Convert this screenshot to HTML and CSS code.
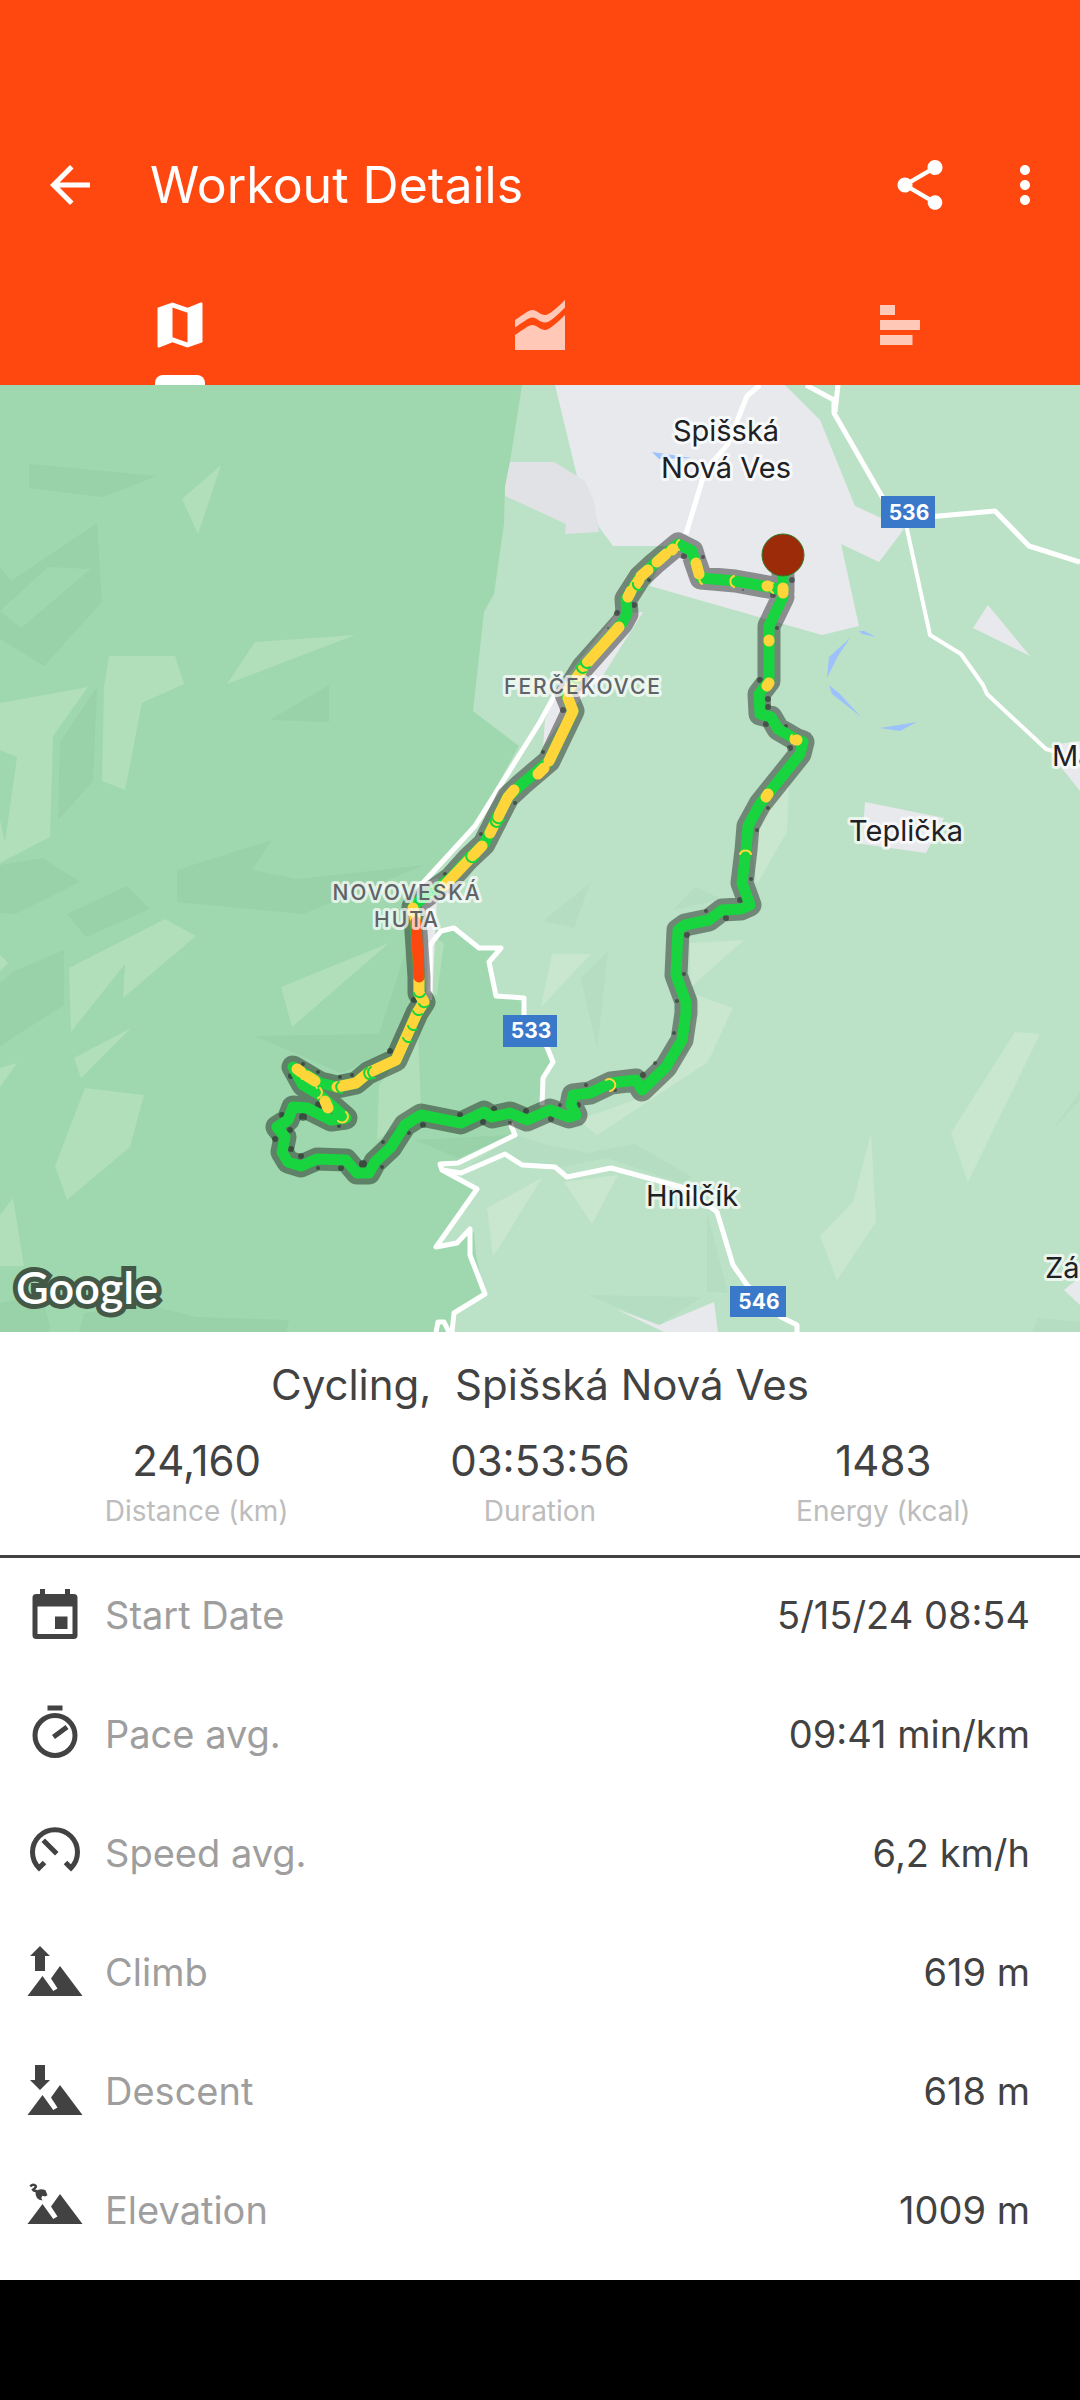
FILE: index.html
```html
<!DOCTYPE html>
<html lang="en">
<head>
    <meta charset="UTF-8">
    <meta name="viewport" content="width=device-width, initial-scale=1.0">
    <title>Workout Details</title>
    <link rel="stylesheet" href="styles.css">
</head>
<body>
    <header class="header">
        <div class="toolbar">
            <button class="icon-btn" aria-label="Back">
                <svg class="icon" viewBox="0 0 24 24"><path d="M20 11H7.83l5.59-5.59L12 4l-8 8 8 8 1.41-1.41L7.83 13H20v-2z"/></svg>
            </button>
            <h1 class="title">Workout Details</h1>
            <button class="icon-btn" aria-label="Share">
                <svg class="icon" viewBox="0 0 24 24"><path d="M18 16.08c-.76 0-1.44.3-1.96.77L8.91 12.7c.05-.23.09-.46.09-.7s-.04-.47-.09-.7l7.05-4.11c.54.5 1.25.81 2.04.81 1.66 0 3-1.34 3-3s-1.34-3-3-3-3 1.34-3 3c0 .24.04.47.09.7L8.04 9.81C7.5 9.31 6.79 9 6 9c-1.66 0-3 1.34-3 3s1.34 3 3 3c.79 0 1.5-.31 2.04-.81l7.12 4.16c-.05.21-.08.43-.08.65 0 1.61 1.31 2.92 2.92 2.92s2.92-1.31 2.92-2.92-1.31-2.92-2.92-2.92z"/></svg>
            </button>
            <button class="icon-btn more" aria-label="More options">
                <svg class="icon" viewBox="0 0 24 24"><path d="M12 8c1.1 0 2-.9 2-2s-.9-2-2-2-2 .9-2 2 .9 2 2 2zm0 2c-1.1 0-2 .9-2 2s.9 2 2 2 2-.9 2-2-.9-2-2-2zm0 6c-1.1 0-2 .9-2 2s.9 2 2 2 2-.9 2-2-.9-2-2-2z"/></svg>
            </button>
        </div>
        <nav class="tabs">
            <button class="tab active" aria-label="Map">
                <svg class="icon" viewBox="0 0 24 24"><path fill-rule="evenodd" d="M3 5.1L9 3l6 2.1L20.3 3q.7-.2.7.5v15.4L15 21l-6-2.1L3.7 21q-.7.2-.7-.5zM9 5v11.9l6 2.1V7.1z"/></svg>
            </button>
            <button class="tab" aria-label="Charts">
                <svg class="icon" viewBox="0 0 24 24"><path d="M2 10C5 8 7.500 6 9 6s3.300 2 5 2 5-3 8-6v3c-3 3-6 6-8 6s-3.500-2-5-2-4 2-7 4z"/><path d="M2 16c3-2 5.500-4 7-4s3.300 2 5 2 5-3 8-6v14H2z"/></svg>
            </button>
            <button class="tab" aria-label="Laps">
                <svg class="icon" viewBox="0 0 24 24"><path d="M4 4h6v4H4zM4 10h16v4H4zM4 16h13v4H4z"/></svg>
            </button>
        </nav>
    </header>

    <svg class="map" viewBox="0 385 1080 947" role="img" aria-label="Route map">
        <rect class="land" y="385" width="1080" height="947"/>
        <polygon class="forest" points="0,385 522,385 510,462 505,487 504,524 494,594 484,612 473,711 519,746 475,826 421,883 430,900 432,930 453,928 479,947 500,948 489,962 496,996 523,999 525,1015 553,1061 543,1080 540,1110 513,1120 514,1135 460,1163 440,1164 442,1172 477,1189 435,1247 457,1243 474,1232 476,1255 484,1294 454,1313 451,1332 0,1332"/>

        <!-- hill shading, west -->
        <g class="forest-dark">
            <polygon points="29,464 157,476 103,497 29,488"/>
            <polygon points="0,567 11,581 97,523 102,602 44,666 0,639"/>
            <polygon points="97,687 93,781 58,820 60,742"/>
            <polygon points="329,685 329,722 270,720"/>
            <polygon points="272,840 252,870 298,879 425,865 303,914 177,902 177,870"/>
            <polygon points="0,865 43,858 80,882 15,914 0,913"/>
            <polygon points="67,914 127,886 150,909 86,937"/>
            <polygon points="0,983 14,971 64,950 64,1005 0,1046"/>
            <polygon points="255,1036 379,1034 406,950 415,997 396,1050 341,1073"/>
            <polygon points="415,1140 510,1135 458,1158"/>
            <polygon points="84,1313 148,1305 196,1317 289,1320 286,1332 79,1332"/>
            <polygon points="0,1303 31,1297 45,1307 50,1327 48,1332 0,1332"/>
        </g>
        <polygon class="forest" points="0,611 48,567 91,569 21,628"/>
        <g class="forest-light">
            <polygon points="182,499 221,465 198,534"/>
            <polygon points="255,642 355,635 227,684"/>
            <polygon points="109,656 175,656 184,684 142,703 125,790 102,781 104,686"/>
            <polygon points="0,703 88,687 53,736 50,837 0,863 0,819 5,842 17,757 0,750"/>
            <polygon points="69,968 165,919 196,936 123,998 125,964 71,1032"/>
            <polygon points="74,1058 131,1028 81,1078"/>
            <polygon points="0,1068 17,1063 0,1087"/>
            <polygon points="85,1088 144,1095 130,1147 67,1200 55,1166"/>
            <polygon points="13,1198 24,1266 0,1266 0,1215"/>
            <polygon points="0,955 8,963 0,971"/>
            <polygon points="281,987 389,943 292,1027"/>
            <polygon points="379,1085 418,1030 421,1107 396,1127 377,1140"/>
            <polygon points="432,936 444,943 437,995 430,995"/>
        </g>

        <!-- hill shading, east -->
        <g class="land-dark">
            <polygon points="543,921 590,883 574,928"/>
            <polygon points="673,910 695,887 722,899"/>
            <polygon points="581,978 608,951 597,1049"/>
            <polygon points="515,1135 540,1143 588,1153 635,1144 692,1177 681,1183 607,1158 561,1167 525,1162 505,1153 470,1165"/>
            <polygon points="707,1213 728,1293 707,1292"/>
            <polygon points="588,1295 702,1297 659,1325"/>
            <polygon points="1080,1092 1080,1100 1053,1129"/>
            <polygon points="1038,1318 1080,1322 1080,1332 1032,1332"/>
        </g>
        <g class="land-light">
            <polygon points="690,943 744,940 690,988"/>
            <polygon points="552,954 591,954 541,1007"/>
            <polygon points="697,995 733,1008 708,1062 597,1135 578,1120 643,1097 688,1050"/>
            <polygon points="1015,1032 1040,1034 968,1182 951,1133"/>
            <polygon points="871,1133 876,1222 837,1280 820,1236 853,1202"/>
            <polygon points="564,1182 618,1175 592,1224"/>
            <polygon points="789,784 787,832 757,884 752,850 770,800"/>
            <polygon points="487,1208 542,1178 493,1257"/>
        </g>

        <g class="urban">
            <polygon points="555,385 785,385 820,420 855,506 879,517 904,529 879,562 841,544 859,626 822,635 650,586 667,546 613,546 599,527 577,476"/>
            <polygon points="616,614 643,612 602,677 564,717 543,747 545,720 560,685"/>
            <polygon points="988,605 1030,656 973,628"/>
            <polygon points="865,802 944,818 926,853 862,844"/>
            <polygon points="1058,744 1080,741 1080,791 1053,757"/>
            <polygon points="714,1302 718,1332 664,1332 616,1309 659,1325"/>
            <polygon points="1064,1290 1080,1277 1080,1305"/>
            <polygon points="421,883 438,878 432,1000 426,1000"/>
        </g>
        <polygon class="industry" points="510,462 554,462 577,476 585,481 594,501 599,532 565,534 566,524 540,512 505,496 505,487"/>
        <g class="water">
            <polygon points="652,452 692,458 659,459"/>
            <polygon points="827,678 829,657 850,638 838,656"/>
            <polygon points="859,631 864,631 876,637 862,634"/>
            <polygon points="829,685 840,694 861,717 832,694"/>
            <polygon points="880,728 917,722 900,731"/>
        </g>

        <g class="roads">
            <polyline points="760,385 747,396 728,444 705,471 686,534"/>
            <polyline points="806,385 834,400 834,413 884,500 905,519 995,511 1029,546 1080,562"/>
            <polyline points="838,385 835,412"/>
            <polyline class="thin" points="905,520 930,635 961,654 983,685 987,694 1046,749 1056,752"/>
            <polyline points="563,680 540,722 475,826 421,885"/>
            <polyline points="430,993 430,945 441,931 454,928 479,948 501,948 489,962 496,996 524,998 524,1015 547,1047 553,1062 543,1078 542,1105"/>
            <polyline points="510,1123 515,1135 458,1163 440,1164 442,1170 477,1189 436,1247 457,1243 470,1229 470,1255 485,1294 454,1313 452,1332"/>
            <polyline points="436,1332 438,1322 444,1322 449,1332"/>
            <polyline points="442,1170 461,1173 505,1154 522,1165 555,1167 567,1177 611,1168 685,1188 717,1212 733,1265 747,1285 781,1317 797,1325 797,1334"/>
        </g>

        <!-- recorded track: casing, line, then speed colours -->
        <polyline class="track-case" points="783,575 783,592 774,588 735,581 701,578 695,561 692,551 678,544 654,564 640,577 626,599 627,614 622,623 583,667 566,694 573,711 549,761 522,784 508,797 484,844 468,859 451,878 418,902 413,907 415,917 419,977 419,993 424,1002 417,1013 396,1060 368,1073 356,1083 337,1087 320,1083 293,1067 303,1085 320,1095 331,1105 346,1118 331,1120 307,1108 293,1107 288,1120 277,1127 285,1137 282,1152 288,1162 301,1166 317,1159 346,1160 357,1173 369,1173 375,1162 391,1147 405,1125 421,1115 461,1123 484,1112 492,1117 510,1113 527,1120 550,1110 569,1117 576,1115 571,1105 573,1095 590,1093 611,1083 636,1080 642,1090 666,1067 682,1040 686,1013 686,1002 676,975 678,930 685,925 709,920 722,910 741,909 750,905 742,883 746,850 748,826 760,804 800,754 803,742 797,740 778,729 771,717 760,714 759,694 769,681 769,626 783,597"/>
        <g class="track-nodes">
            <circle cx="684" cy="556" r="3"/><circle cx="703" cy="557" r="2"/><circle cx="649" cy="580" r="2"/><circle cx="617" cy="613" r="3"/><circle cx="634" cy="605" r="3"/><circle cx="608" cy="628" r="1"/><circle cx="743" cy="590" r="1"/><circle cx="773" cy="595" r="3"/><circle cx="792" cy="580" r="3"/><circle cx="777" cy="628" r="2"/><circle cx="760" cy="680" r="3"/><circle cx="768" cy="699" r="3"/><circle cx="768" cy="707" r="3"/><circle cx="766" cy="724" r="3"/><circle cx="786" cy="726" r="2"/><circle cx="790" cy="748" r="3"/><circle cx="768" cy="808" r="2"/><circle cx="757" cy="830" r="2"/><circle cx="751" cy="879" r="2"/><circle cx="740" cy="900" r="3"/><circle cx="726" cy="918" r="3"/><circle cx="706" cy="911" r="2"/><circle cx="687" cy="935" r="3"/><circle cx="684" cy="974" r="2"/><circle cx="677" cy="1001" r="2"/><circle cx="674" cy="1033" r="2"/><circle cx="655" cy="1063" r="2"/><circle cx="643" cy="1075" r="3"/><circle cx="615" cy="1090" r="2"/><circle cx="586" cy="1085" r="2"/><circle cx="578" cy="1105" r="3"/><circle cx="560" cy="1105" r="2"/><circle cx="551" cy="1119" r="3"/><circle cx="526" cy="1111" r="3"/><circle cx="510" cy="1123" r="2"/><circle cx="494" cy="1109" r="3"/><circle cx="483" cy="1122" r="3"/><circle cx="460" cy="1115" r="3"/><circle cx="423" cy="1125" r="3"/><circle cx="409" cy="1133" r="2"/><circle cx="383" cy="1142" r="2"/><circle cx="382" cy="1167" r="2"/><circle cx="363" cy="1164" r="4"/><circle cx="341" cy="1168" r="3"/><circle cx="318" cy="1168" r="2"/><circle cx="301" cy="1156" r="3"/><circle cx="291" cy="1149" r="3"/><circle cx="275" cy="1139" r="3"/><circle cx="290" cy="1130" r="3"/><circle cx="282" cy="1115" r="3"/><circle cx="303" cy="1117" r="4"/><circle cx="319" cy="1105" r="4"/><circle cx="339" cy="1126" r="2"/><circle cx="291" cy="1076" r="3"/><circle cx="303" cy="1064" r="2"/><circle cx="318" cy="1072" r="2"/><circle cx="340" cy="1077" r="2"/><circle cx="352" cy="1075" r="2"/><circle cx="390" cy="1051" r="3"/><circle cx="414" cy="1000" r="3"/><circle cx="445" cy="874" r="2"/><circle cx="481" cy="834" r="2"/><circle cx="515" cy="803" r="2"/><circle cx="543" cy="752" r="2"/><circle cx="563" cy="710" r="3"/>
        </g>
        <polyline class="track" points="783,575 783,592 774,588 735,581 701,578 695,561 692,551 678,544 654,564 640,577 626,599 627,614 622,623 583,667 566,694 573,711 549,761 522,784 508,797 484,844 468,859 451,878 418,902 413,907 415,917 419,977 419,993 424,1002 417,1013 396,1060 368,1073 356,1083 337,1087 320,1083 293,1067 303,1085 320,1095 331,1105 346,1118 331,1120 307,1108 293,1107 288,1120 277,1127 285,1137 282,1152 288,1162 301,1166 317,1159 346,1160 357,1173 369,1173 375,1162 391,1147 405,1125 421,1115 461,1123 484,1112 492,1117 510,1113 527,1120 550,1110 569,1117 576,1115 571,1105 573,1095 590,1093 611,1083 636,1080 642,1090 666,1067 682,1040 686,1013 686,1002 676,975 678,930 685,925 709,920 722,910 741,909 750,905 742,883 746,850 748,826 760,804 800,754 803,742 797,740 778,729 771,717 760,714 759,694 769,681 769,626 783,597"/>
        <g class="track-slow">
            <path d="M673 549l-1 1M666 554l-9 8M648 570l-7 6M639 580l-4 6M631 591l-3 6M696 563l3 11M783 588v5M767 586h1M769 640v1M769 683l-2 3M796 740h1M768 794l-2 3"/>
            <path d="M619 627L587 663M582 670L568 690M568 698l5 13-24 50M544 768l-6 6M514 790l-6 7-18 36M482 846L444 886M413 908l2 10"/>
            <path d="M419 980v13l5 9-7 11-21 47-28 13-12 10-19 4M315 1081l-8-5M301 1072l-4-3M325 1101l3 7"/>
        </g>
        <path class="track-stop" d="M416 922l3 55"/>
        <g class="tick-green">
            <path d="M493 814a6 6 0 0 0 11 6M491 819a6 6 0 0 0 10 6M467 853a6 6 0 0 0 11 6M414 993a6 6 0 0 0 11 1M419 1004a6 6 0 0 0 9 2M413 1011a6 6 0 0 0 9 3M408 1026a6 6 0 0 0 9 3M403 1038a6 6 0 0 0 9 3M371 1067a6 6 0 0 0 4 11M367 1068a6 6 0 0 0 4 11M339 1082a6 6 0 0 0 3 11M577 666a6 6 0 0 0 9 6M581 661a6 6 0 0 0 9 6M571 676a6 6 0 0 0 9 6M633 583a6 6 0 0 0 9 6"/>
        </g>
        <g class="tick-yellow">
            <path d="M734 576a6 6 0 0 0 0 11M679 540a6 6 0 0 0 0 10M702 574a6 6 0 0 0 0 10M773 583a6 6 0 0 0 0 10M740 854a6 6 0 0 1 11 0M606 1080a6 6 0 1 1 4 11M346 1112a6 6 0 0 1-8 9M318 1079a6 6 0 0 0-1 9M304 1069a6 6 0 0 0-2 10M320 1088a6 6 0 0 1-2 10M792 735a6 6 0 0 0 0 8"/>
        </g>
        <circle class="pin" cx="783" cy="555" r="21"/>

        <text class="town" x="726" y="441">Spišská</text>
        <text class="town" x="726" y="478">Nová Ves</text>
        <text class="town" x="906" y="841">Teplička</text>
        <text class="town" x="692" y="1206">Hnilčík</text>
        <text class="town edge" x="1052" y="766">Ma</text>
        <text class="town edge" x="1045" y="1278">Zá</text>
        <text class="district" x="583" y="694">FERČEKOVCE</text>
        <text class="district" x="407" y="900">NOVOVESKÁ</text>
        <text class="district" x="407" y="927">HUTA</text>

        <g class="shield"><rect x="881" y="496" width="54" height="32"/><text x="909" y="520">536</text></g>
        <g class="shield"><rect x="503" y="1015" width="54" height="32"/><text x="531" y="1038">533</text></g>
        <g class="shield"><rect x="730" y="1286" width="56" height="31"/><text x="759" y="1309">546</text></g>

        <text class="brand" x="16" y="1304">Google</text>
    </svg>

    <section class="summary">
        <h2 class="activity">Cycling,&nbsp; Spišská Nová Ves</h2>
        <div class="stats">
            <div class="stat"><div class="number">24,160</div><div class="unit">Distance (km)</div></div>
            <div class="stat"><div class="number">03:53:56</div><div class="unit">Duration</div></div>
            <div class="stat"><div class="number">1483</div><div class="unit">Energy (kcal)</div></div>
        </div>
    </section>

    <dl class="details">
        <div class="row">
            <svg class="icon" viewBox="0 0 24 24"><path fill-rule="evenodd" d="M6 2h2v2h8V2h2v2h1.500Q21 4 21 5.500v15q0 1.500-1.500 1.500h-15Q3 22 3 20.500v-15Q3 4 4.500 4H6zM5 9v11h14V9zM12 13h5v5h-5z"/></svg>
            <dt>Start Date</dt>
            <dd>5/15/24 08:54</dd>
        </div>
        <div class="row">
            <svg class="icon line" viewBox="0 0 24 24"><path d="M9 2h6M11.400 13.600l5.400-4"/><circle cx="12" cy="13" r="8"/></svg>
            <dt>Pace avg.</dt>
            <dd>09:41 min/km</dd>
        </div>
        <div class="row">
            <svg class="icon line" viewBox="0 0 24 24"><path d="M7.800 16.200l-2.200 2.200a9 9 0 1 1 12.800 0l-2.200-2.200M7.300 7.300l5.400 5.400"/></svg>
            <dt>Speed avg.</dt>
            <dd>6,2 km/h</dd>
        </div>
        <div class="row">
            <svg class="icon" viewBox="0 0 24 24"><path d="M6 2l4 4H8v6H4V6H2zM1 22l6-8 4.300 6 1.700-1-2.600-4L14 10l9 12z"/></svg>
            <dt>Climb</dt>
            <dd>619 m</dd>
        </div>
        <div class="row">
            <svg class="icon" viewBox="0 0 24 24"><path d="M4 2h4v6h2l-4 4-4-4h2zM1 22l6-8 4.300 6 1.700-1-2.600-4L14 10l9 12z"/></svg>
            <dt>Descent</dt>
            <dd>618 m</dd>
        </div>
        <div class="row">
            <svg class="icon" viewBox="0 0 24 24"><path d="M1 18l6-8 4.300 6 1.700-1-2.600-4L14 6l9 12z"/><path d="M4.200 5Q6 3.400 8.200 4.500l.8 2-1 .5-1-.3-.5.9.5 1Q4 8.500 4.200 5z"/><path class="tail" d="M2.100 3Q3 2 4 2.500T3.200 4.300q.3.700 1.700.5"/></svg>
            <dt>Elevation</dt>
            <dd>1009 m</dd>
        </div>
    </dl>
</body>
</html>
```
FILE: styles.css
```css
body {
    margin: 0;
    background-color: #000;
    color: #424242;
    font-family: Inter, "Open Sans", sans-serif;
}
button {
    border: none;
    background: none;
    padding: 0;
    color: inherit;
    cursor: pointer;
}
.icon {
    display: block;
    flex: none;
    width: 60px;
    height: 60px;
    fill: currentColor;
}

/* header */
.header {
    padding-top: 105px;
    background-color: #ff4810;
    color: #fff;
}
.toolbar {
    display: flex;
    align-items: center;
    height: 160px;
    padding: 0 25px 0 40px;
}
.title {
    flex: 1;
    margin: 0 0 0 50px;
    font-size: 50px;
    font-weight: 400;
    line-height: 60px;
}
.more {
    margin-left: 45px;
}
.tabs {
    display: flex;
}
.tab {
    flex: 1;
    display: flex;
    justify-content: center;
    align-items: center;
    position: relative;
    height: 120px;
    color: rgba(255, 255, 255, 0.7);
}
.tab.active {
    color: #fff;
}
.tab.active::after {
    content: "";
    position: absolute;
    bottom: 0;
    width: 50px;
    height: 10px;
    border-radius: 8px 8px 0 0;
    background-color: #fff;
}

/* map */
.map {
    display: block;
    width: 100%;
    overflow: hidden;
}
.land { fill: #bbe2c6; }
.land-dark { fill: #b4ddc1; }
.land-light { fill: #c9e7cf; }
.forest { fill: #9fd8ae; }
.forest-dark { fill: #99d1a8; }
.forest-light { fill: #b0dfb9; }
.urban { fill: #e8e9ed; }
.industry { fill: #e1e2e6; }
.water { fill: #9dc1fb; }
.roads {
    fill: none;
    stroke: #fff;
    stroke-width: 5;
    stroke-linejoin: round;
}
.thin {
    stroke-width: 4;
}
.track-case,
.track,
.track-slow,
.track-stop,
.tick-green,
.tick-yellow {
    fill: none;
    stroke-linecap: round;
    stroke-linejoin: round;
}
.track-case {
    stroke: #000;
    stroke-opacity: 0.4;
    stroke-width: 23;
}
.track-nodes {
    fill: #000;
    fill-opacity: 0.4;
}
.track {
    stroke: #18d53f;
    stroke-width: 11;
}
.track-slow {
    stroke: #ffd53a;
    stroke-width: 11;
}
.track-stop {
    stroke: #ff480f;
    stroke-width: 11;
}
.tick-green {
    stroke: #18d53f;
    stroke-width: 2;
}
.tick-yellow {
    stroke: #ffd53a;
    stroke-width: 2;
}
.pin {
    fill: #9c2b09;
    stroke: #2c7a24;
    stroke-width: 1;
}
.town,
.district {
    text-anchor: middle;
    paint-order: stroke;
    stroke: rgba(255, 255, 255, 0.7);
    stroke-width: 6;
    stroke-linejoin: round;
}
.town {
    fill: #202124;
    font-size: 29px;
    font-weight: 400;
}
.edge {
    text-anchor: start;
}
.district {
    fill: #5f6368;
    font-size: 21px;
    font-weight: 500;
    letter-spacing: 2px;
}
.shield rect {
    fill: #3a78c9;
}
.shield text {
    fill: #fff;
    font-size: 21px;
    font-weight: 700;
    text-anchor: middle;
}
.brand {
    fill: #fff;
    font-family: Lato, sans-serif;
    font-size: 45px;
    font-weight: 600;
    paint-order: stroke;
    stroke: #435846;
    stroke-width: 10;
}

/* totals */
.summary {
    padding: 23px 25px 26px;
    border-bottom: 3px solid #424242;
    background-color: #fff;
}
.activity {
    margin: 0 0 19px;
    font-size: 42px;
    font-weight: 400;
    line-height: 60px;
    text-align: center;
}
.stats {
    display: flex;
}
.stat {
    flex: 1;
    text-align: center;
}
.number {
    margin-bottom: 5px;
    font-size: 42px;
    line-height: 54px;
}
.unit {
    color: #bdbdbd;
    font-size: 28px;
    line-height: 36px;
}

/* detail rows */
.details {
    margin: 0;
    padding-bottom: 8px;
    background-color: #fff;
}
.row {
    display: flex;
    align-items: center;
    height: 119px;
    padding: 0 50px 0 25px;
    font-size: 38px;
}
.row .icon {
    margin: 0 20px 8px 0;
}
.row dt,
.row dd {
    margin: 0 0 6px;
}
.row dt {
    color: #9e9e9e;
}
.row dd {
    margin-left: auto;
}
.line {
    fill: none;
    stroke: currentColor;
    stroke-width: 2;
}
.tail {
    fill: none;
    stroke: currentColor;
}
```
